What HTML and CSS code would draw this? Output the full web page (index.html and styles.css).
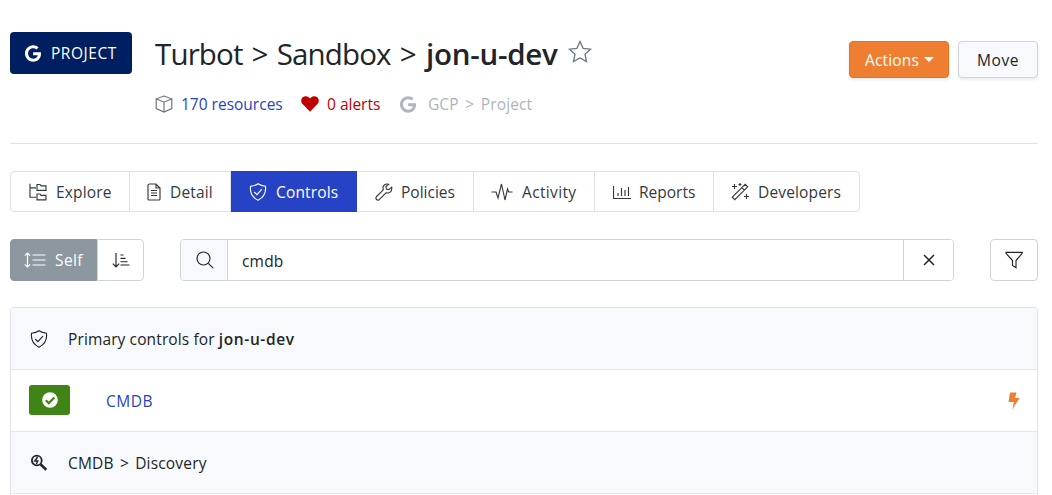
FILE: index.html
```
<!DOCTYPE html>
<html lang="en">
<head>
<meta charset="utf-8">
<title>jon-u-dev controls</title>
<link rel="stylesheet" href="styles.css">
</head>
<body>
<svg class="defs" width="0" height="0">
  <symbol id="google" viewBox="0 0 488 512"><path fill="currentColor" d="M488 261.8C488 403.3 391.1 504 248 504 110.8 504 0 393.2 0 256S110.8 8 248 8c66.8 0 123 24.5 166.3 64.9l-67.5 64.9C258.5 52.6 94.3 116.6 94.3 256c0 86.5 69.1 156.6 153.7 156.6 98.2 0 135-70.4 140.8-106.9H248v-85.3h236.1c2.3 12.7 3.9 24.9 3.9 41.4z"/></symbol>
  <symbol id="shield" viewBox="0 0 18 18"><path d="M9 .8C7 2.2 4.5 3 1.6 3.2C.8 8.5 2.5 14 9 17.2C15.500 14 17.200 8.500 16.400 3.200C13.500 3 11 2.200 9 .8ZM5.200 9l2.700 2.700 5-5.500"/></symbol>
</svg>
<main class="page">
  <header class="header">
    <div class="badge"><svg class="g" viewBox="0 0 488 512"><use href="#google"/></svg><span class="t-project">PROJECT</span></div>
    <div class="heading">
      <h1 class="title"><span class="t-path">Turbot &gt; Sandbox &gt;</span><strong class="t-name">jon-u-dev</strong>
        <svg class="star" viewBox="0 0 24 24"><path d="M12 1.500l3.100 6.800 7.400.9-5.500 5 1.500 7.400L12 18l-6.500 3.600L7 14.200l-5.500-5 7.400-.9z"/></svg></h1>
      <div class="meta">
        <svg class="cube" viewBox="0 0 18 18"><path d="M9 1l7.800 2.800v9.800L9 17 1.200 13.600V3.800zM1.200 3.800L9 7.200l7.800-3.400M9 7.200V17"/></svg>
        <a class="link t-res">170 resources</a>
        <svg class="heart" viewBox="0 0 18 16"><path d="M9 15.700L1.600 8.100C-.3 6.100-.2 3 1.700 1.300 3.700-.4 6.700-.1 8.400 1.800L9 2.500l.6-.7c1.700-1.900 4.700-2.200 6.700-.5 1.900 1.700 2 4.800.1 6.800z"/></svg>
        <span class="alerts t-alerts">0 alerts</span>
        <svg class="g muted" viewBox="0 0 488 512"><use href="#google"/></svg>
        <span class="muted t-gcp">GCP &gt; Project</span>
      </div>
    </div>
    <div class="actions">
      <button class="btn primary"><span class="t-actions">Actions</span><i class="caret"></i></button>
      <button class="btn move"><span class="t-move">Move</span></button>
    </div>
  </header>
  <nav class="tabs">
    <a class="tab explore"><svg class="ic" viewBox="0 0 18 18"><path d="M1 .8v13.400h6M1 4.800h6M8 1.500h3l1 1.300h5v4.600H8zM8 11h3l1 1.300h5v4.500H8z"/></svg><span class="t-explore">Explore</span></a>
    <a class="tab detail"><svg class="ic doc" viewBox="0 0 14 18"><path d="M2.500 1H9l4 4v11a1 1 0 0 1-1 1H2a1 1 0 0 1-1-1V2.500A1.500 1.500 0 0 1 2.500 1zM9 1v4h4M4 7.500h6M4 10h6M4 12.500h6"/></svg><span class="t-detail">Detail</span></a>
    <a class="tab active"><svg class="ic"><use href="#shield"/></svg><span class="t-controls">Controls</span></a>
    <a class="tab policies"><svg class="ic" viewBox="0 0 18 18"><path d="M16.700 4.300l-3 2.300-2.300-.5-.5-2.300 2.800-2.500C10.800.3 7.700 2.300 8 5.300l.3 1.500-6.700 6.700c-1 1-.8 2.300-.1 3 .9.9 2.200.8 3-.1l6.700-6.700c3.200 1.200 6.200-1.600 5.500-5.400z"/></svg><span class="t-policies">Policies</span></a>
    <a class="tab activity"><svg class="ic wide" viewBox="0 0 22 18"><path d="M.5 9H5l2 6L10.500 1l3.500 16L16.500 6l1.200 3h3.800"/></svg><span class="t-activity">Activity</span></a>
    <a class="tab reports"><svg class="ic" viewBox="0 0 18 18"><path d="M.5 3v12.500H18M5 13V10M8.500 13V5M12 13V7M15.500 13V4"/></svg><span class="t-reports">Reports</span></a>
    <a class="tab developers"><svg class="ic" viewBox="0 0 18 18"><path d="M1.300 14.200L14.200 1.300l2.500 2.500L3.800 16.700zM10.800 4.700l2.500 2.500M3.500 1v5M1 3.500h5M9 0v3M7.500 1.500h3M15.500 11v5M13 13.500h5"/></svg><span class="t-developers">Developers</span></a>
  </nav>
  <div class="toolbar">
    <div class="sorting">
      <button class="self"><svg class="scope" viewBox="0 0 22 18"><path d="M3.500 2v14M.8 4.700L3.500 2l2.700 2.700M.8 13.300L3.500 16l2.700-2.700M8.500 4h13M8.500 9h13M8.500 14h13"/></svg><span class="t-self">Self</span></button>
      <button class="sort"><svg class="ic" viewBox="0 0 18 18"><path d="M4 2v14M.8 12.700L4 16l3.200-3.300M8.500 4h3M8.500 7.300h5M8.500 10.700h7M8.500 14h9"/></svg></button>
    </div>
    <div class="search">
      <span class="lens"><svg class="ic" viewBox="0 0 18 18"><circle cx="7.500" cy="7.500" r="6.500"/><path d="M12.300 12.300l4.900 4.900"/></svg></span>
      <span class="query"><span class="t-query">cmdb</span></span>
      <button class="clear"><svg class="cross" viewBox="0 0 12 12"><path d="M1 1l10 10M11 1L1 11"/></svg></button>
    </div>
    <button class="filter"><svg class="ic" viewBox="0 0 18 18"><path d="M1 1.300h16.200v1L11 9.500v7.200l-3.500-2.300V9.500L1 2.300z"/></svg></button>
  </div>
  <section class="panel">
    <div class="row shaded"><svg class="ic"><use href="#shield"/></svg><span class="t-primary">Primary controls for <strong>jon-u-dev</strong></span></div>
    <div class="row item"><span class="status"><svg class="ok" viewBox="0 0 16 16"><circle cx="8" cy="8" r="7.800"/><path d="M3.800 8.200l3 3 5.500-5.700"/></svg></span><a class="link t-cmdb">CMDB</a><svg class="bolt" viewBox="0 0 12 18"><path d="M2 .5h6.500L7 6h4.700L4.200 17.500 6 10H.5z"/></svg></div>
    <div class="row shaded"><svg class="ic inspect" viewBox="0 0 18 18"><circle cx="6.800" cy="6.500" r="4.900"/><path class="handle" d="M10.500 10.300l5.700 5.500"/><path class="spark" d="M7.600 3L4.800 7h3L6.300 10"/></svg><span class="t-discovery">CMDB &gt; Discovery</span></div>
  </section>
</main>
</body>
</html>
```
FILE: styles.css
```
* { box-sizing: border-box; }
body { margin: 0; background: #fff; color: #212529; font: 15.5px/24px "Open Sans", "Noto Sans", sans-serif; overflow: hidden; }
button { font: inherit; color: inherit; background: #fff; padding: 0; margin: 0; border: 1px solid #ced4da; display: flex; align-items: center; }
span, strong, a { white-space: nowrap; }
strong { font-weight: 600; }
svg { flex: none; display: block; fill: none; stroke: currentColor; stroke-width: 1.150; }
.defs { position: absolute; }
.page { width: 1028px; margin-left: 10px; padding-top: 32px; }
.header { display: flex; height: 112px; border-bottom: 1px solid #dfe2e5; }
.badge { width: 122px; height: 42px; border-radius: 4px; background: #001f60; color: #fff; display: flex; align-items: center; padding-left: 15px; gap: 10px; }
.g { width: 16px; height: 17px; stroke: none; }
.heading { margin-left: 23px; flex: 1; }
.title { display: flex; margin: 0; height: 46px; font-size: 29.500px; font-weight: 400; line-height: 44px; }
.t-project { letter-spacing: .55px; }
.t-path { width: 271px; letter-spacing: -.85px; word-spacing: 2.200px; }
.t-name { width: 142px; letter-spacing: -.25px; }
.star { width: 24px; height: 24px; margin-top: 8px; color: #6c757d; stroke-width: 1.300; }
.meta { display: flex; align-items: center; height: 24px; margin-top: 14px; }
.cube { width: 18px; height: 18px; color: #6c757d; margin-right: 8px; }
.link { color: #2643c5; }
.t-res { width: 120px; }
.heart { width: 18px; height: 16px; fill: #c00000; stroke: none; margin-right: 8px; }
.alerts { color: #c00000; width: 73px; }
.muted { color: #adb5bd; }
.muted.g { margin-right: 12px; }
.t-gcp { letter-spacing: .1px; word-spacing: 2.500px; }
.actions { display: flex; gap: 9px; padding-top: 9px; }
.btn { height: 37px; border-radius: 4px; box-shadow: 0 2px 3px #00000014; }
.primary { width: 100px; padding-left: 15px; background: #ee7f31; border-color: #ec7119; color: #fff; }
.t-actions { letter-spacing: .15px; }
.caret { border: 5px solid transparent; border-top-color: #fff; border-bottom: 0; margin-left: 5px; }
.move { width: 80px; padding-left: 18px; background: #f7f9fc; letter-spacing: .6px; }
.tabs { display: flex; width: 850px; height: 41px; margin-top: 27px; border: 1px solid #dee2e6; border-radius: 4px; }
.tab { display: flex; align-items: center; border-right: 1px solid #dee2e6; color: #343a40; gap: 9px; padding-left: 18px; }
.tab:last-child { border: 0; }
.ic { width: 18px; height: 18px; }
.doc { width: 14px; }
.wide { width: 22px; }
.explore { width: 119px; }
.t-explore { letter-spacing: .15px; }
.detail { width: 101px; padding-left: 17px; }
.t-detail { letter-spacing: .15px; }
.active { width: 126px; background: #2643c5; color: #fff; margin: -1px 0; border: 0; }
.t-controls { letter-spacing: .15px; }
.policies { width: 117px; gap: 8px; }
.activity { width: 121px; gap: 8px; padding-left: 17px; }
.t-activity { letter-spacing: .35px; margin-left: 1px; }
.reports { width: 119px; gap: 8px; }
.developers { flex: 1; padding-left: 17px; }
.t-developers { letter-spacing: .15px; }
.toolbar { display: flex; height: 42px; margin-top: 27px; }
.sorting { display: flex; width: 134px; margin-right: 36px; }
.self { width: 87px; padding-left: 13px; gap: 9px; background: #8d979f; border-color: #8d979f; color: #fff; border-radius: 4px 0 0 4px; }
.t-self { letter-spacing: .4px; }
.scope { width: 22px; height: 18px; }
.sort { width: 47px; border-radius: 0 4px 4px 0; padding-left: 14px; }
.search { display: flex; width: 774px; margin-right: 36px; border: 1px solid #ced4da; border-radius: 4px; overflow: hidden; }
.lens { display: flex; align-items: center; justify-content: center; width: 47px; background: #f7f9fc; border-right: 1px solid #ced4da; padding-left: 1px; }
.query { flex: 1; display: flex; align-items: center; padding: 2px 0 0 14px; letter-spacing: .2px; }
.clear { width: 50px; border-width: 0 0 0 1px; justify-content: center; }
.cross { width: 12px; height: 12px; stroke-width: 1.500; }
.filter { width: 48px; border-radius: 4px; justify-content: center; }
.panel { height: 200px; margin-top: 26px; border: 1px solid #dee2e6; border-bottom: 0; border-radius: 4px 4px 0 0; overflow: hidden; }
.row { height: 62px; display: flex; align-items: center; padding: 0 17px 0 19px; border-bottom: 1px solid #e4e8eb; }
.shaded { background: #f7f9fc; gap: 20px; }
.t-primary { letter-spacing: .12px; }
.t-primary strong { letter-spacing: .6px; }
.t-cmdb { letter-spacing: .5px; }
.t-discovery { letter-spacing: .18px; word-spacing: 2px; }
.item { padding-left: 18px; }
.status { width: 41px; height: 30px; border-radius: 3px; background: #3f8414; display: flex; align-items: center; justify-content: center; margin: -1px 36px 0 0; }
.ok { width: 16px; height: 16px; stroke: none; fill: #fff; }
.ok path { fill: none; stroke: #3f8414; stroke-width: 2.200; }
.bolt { width: 12px; height: 18px; fill: #ee7f31; stroke: none; margin-left: auto; }
.inspect { stroke-width: 1.800; }
.handle { stroke-width: 2.600; }
.spark { stroke-width: 1.500; }
```
